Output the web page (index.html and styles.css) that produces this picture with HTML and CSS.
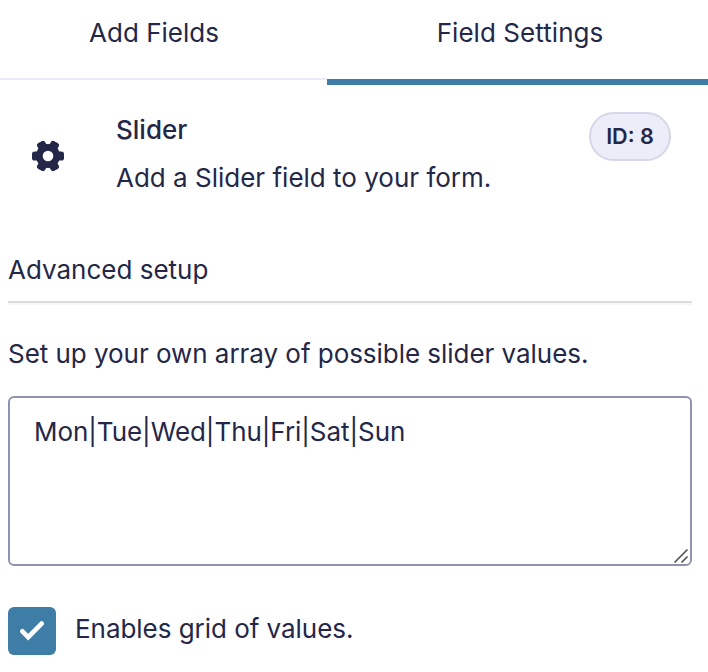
FILE: index.html
```html
<!DOCTYPE html>
<html lang="en">
	<head>
		<meta charset="UTF-8">
		<meta name="viewport" content="width=device-width, initial-scale=1.0">
		<title>Field Settings</title>

		<link rel="stylesheet" href="styles.css">
	</head>

	<body>
		<nav class="tabs">
			<a class="tab"><span>Add Fields</span></a>
			<a class="tab active"><span>Field Settings</span></a>
		</nav>

		<main>
			<header class="field-info">
				<svg class="gear" viewBox="0 0 32 32" width="32" height="32">
					<g fill="#242748">
						<circle cx="16" cy="16" r="12"/>
						<rect x="0" y="11.5" width="32" height="9" rx="2.6"/>
						<rect x="0" y="11.5" width="32" height="9" rx="2.6" transform="rotate(60 16 16)"/>
						<rect x="0" y="11.5" width="32" height="9" rx="2.6" transform="rotate(120 16 16)"/>
					</g>
					<circle cx="16" cy="16" r="5.3" fill="#fff"/>
				</svg>
				<div class="field-text">
					<strong>Slider</strong>
					<p>Add a Slider field to your form.</p>
				</div>
				<span class="field-id">ID: 8</span>
			</header>

			<section class="setup">
				<h2>Advanced setup</h2>
				<label for="values">Set up your own array of possible slider values.</label>
				<div class="textarea-wrap">
					<textarea id="values" spellcheck="false">Mon|Tue|Wed|Thu|Fri|Sat|Sun</textarea>
					<svg class="grip" viewBox="0 0 16 16" width="16" height="16">
						<path d="M1.5 14.5L14.5 1.5M8.5 14.5l6-6" stroke="#555" stroke-width="1.7" fill="none"/>
					</svg>
				</div>
				<label class="check">
					<span class="box">
						<svg viewBox="0 0 24 20" width="24" height="20">
							<path d="M2.4 10.3l5.8 5.8L21.6 2.6" stroke="#fff" stroke-width="4.7" stroke-linecap="round" fill="none"/>
						</svg>
					</span>
					<span class="check-text">Enables grid of values.</span>
				</label>
			</section>
		</main>
	</body>
</html>
```

FILE: styles.css
```css
body {
	margin: 0;
	background: #fff;
	color: #242748;
	font: 26px/32px Inter, sans-serif;
}

.tabs {
	display: flex;
	height: 85px;
}

.tab {
	box-sizing: border-box;
	width: 327px;
	height: 80px;
	padding-top: 17px;
	padding-right: 19px;
	border-bottom: 2px solid #ebebf8;
	text-align: center;
}

.tab.active {
	width: 381px;
	height: 85px;
	padding-right: 0;
	padding-left: 5px;
	border-bottom: 6px solid #3e7da6;
	letter-spacing: 0.06px;
}

.field-info {
	display: flex;
	align-items: flex-start;
	height: 149px;
	padding: 27px 37px 0 32px;
}

.gear {
	margin-top: 28px;
}

.field-text {
	flex: 1;
	margin: 2px 0 0 52px;
}

.field-text strong {
	display: block;
	font-weight: 500;
}

.field-text p {
	margin: 16px 0 0;
}

.field-id {
	box-sizing: border-box;
	width: 82px;
	height: 49px;
	border: 2px solid #d5d7e9;
	border-radius: 25px;
	background: #ecedf8;
	font-size: 21.6px;
	font-weight: 600;
	line-height: 45px;
	text-align: center;
}

.setup {
	margin-top: -7px;
	padding: 0 16px 0 8px;
	letter-spacing: -0.04px;
}

.setup h2 {
	margin: 0 0 35px;
	padding-bottom: 15px;
	border-bottom: 2px solid #dcdcde;
	box-shadow: 0 2px 0 #f6f6f6;
	font-size: 26px;
	font-weight: 400;
	letter-spacing: 0;
}

.setup label {
	display: block;
}

.textarea-wrap {
	position: relative;
	height: 170px;
	margin: 26px 0 41px;
}

textarea {
	box-sizing: border-box;
	display: block;
	width: 100%;
	height: 100%;
	padding: 18px 24px;
	border: 2px solid #9092b2;
	border-radius: 6px;
	background: #fff;
	color: inherit;
	font: inherit;
	letter-spacing: -0.06px;
	resize: none;
}

.grip {
	position: absolute;
	right: 3px;
	bottom: 2px;
}

.setup .check {
	display: flex;
	align-items: center;
	gap: 19px;
}

.check-text {
	padding-bottom: 4px;
}

.box {
	display: flex;
	align-items: center;
	justify-content: center;
	width: 48px;
	height: 48px;
	border-radius: 6px;
	background: #3e7da6;
}
```
